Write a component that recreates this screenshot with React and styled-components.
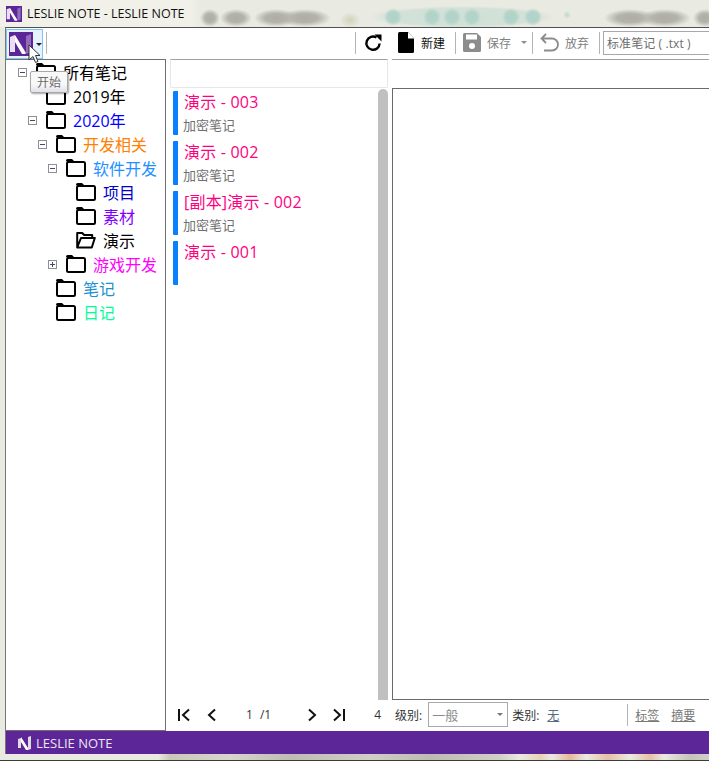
import React from 'react';
import styled, {createGlobalStyle} from 'styled-components';

const CJK = `"Open Sans", "Noto Sans CJK SC", sans-serif`;

const GlobalStyle = createGlobalStyle`
  html, body {
    margin: 0;
    padding: 0;
    background: #e9eae2;
    overflow: hidden;
  }
  * {
    box-sizing: border-box;
  }
`;

const Screen = styled.div`
  position: relative;
  width: 709px;
  height: 761px;
  display: flex;
  flex-direction: column;
  font-family: ${CJK};
  background: #e9eae2;
  overflow: hidden;
`;

const greenDot = x => `radial-gradient(circle 9px at ${x}px 17px, #b0d2c8 0%, #b4d4ca 60%, rgba(190, 216, 206, 0) 100%)`;
const greyDot = (x, w) => `radial-gradient(ellipse ${w}px 9px at ${x}px 18px, #adada6 0%, #b4b4ac 50%, rgba(170, 170, 162, 0) 100%)`;

const TitleBar = styled.div`
  height: 27px;
  flex: none;
  display: flex;
  align-items: center;
  gap: 5px;
  padding-left: 6px;
  font-size: 12.5px;
  color: #111;
  background:
    ${greenDot(393)},
    ${greenDot(432)},
    ${greenDot(452)},
    ${greenDot(472)},
    ${greenDot(511)},
    ${greenDot(533)},
    radial-gradient(circle 4px at 567px 15px, #bcd6cc 0%, rgba(190, 216, 206, 0) 100%),
    radial-gradient(ellipse 92px 11px at 462px 17px, #cfe0d6 0%, #d2e2d8 80%, rgba(210, 226, 216, 0) 100%),
    radial-gradient(ellipse 10px 8px at 350px 20px, #d2d2b8 0%, rgba(210, 210, 184, 0) 100%),
    ${greyDot(210, 10)},
    ${greyDot(236, 16)},
    ${greyDot(276, 22)},
    ${greyDot(305, 26)},
    ${greyDot(630, 26)},
    ${greyDot(665, 26)},
    ${greyDot(705, 12)},
    linear-gradient(90deg, #f1f1ea 0 190px, #e9eae2 200px);
`;

const Window = styled.div`
  flex: 1;
  display: flex;
  flex-direction: column;
  margin-left: 5px;
  min-height: 0;
  border-top: 1px solid #505050;
  border-left: 1px solid #777;
  background: #fff;
`;

const Toolbar = styled.div`
  height: 31px;
  flex: none;
  display: flex;
  align-items: center;
  padding-bottom: 2px;
  font-size: 12px;
`;

const StartButton = styled.div`
  width: 37px;
  height: 30px;
  align-self: flex-start;
  margin-top: 1px;
  display: flex;
  align-items: center;
  gap: 3px;
  padding-left: 2px;
  border: 1px solid #7ec4f5;
  background: #e4f3fd;
`;

const Caret = styled.span`
  width: 0;
  height: 0;
  border-left: 3px solid transparent;
  border-right: 3px solid transparent;
  border-top: 3px solid ${props => props.$color || '#222'};
`;

const Sep = styled.span`
  width: 1px;
  height: ${props => props.$h || 22}px;
  flex: none;
  background: #b4b4b4;
  margin: ${props => props.$m || '0'};
`;

const Spacer = styled.div`
  flex: 1;
`;

const ToolLabel = styled.span`
  color: ${props => (props.$dim ? '#808080' : '#111')};
  margin: ${props => props.$m || '0'};
`;

const FormatBox = styled.div`
  width: 106px;
  height: 24px;
  flex: none;
  display: flex;
  align-items: center;
  padding-left: 3px;
  font-size: 12px;
  letter-spacing: 0.1px;
  color: #6d6d6d;
  white-space: nowrap;
  border: 1px solid #a8a8a8;
  border-right: none;
`;

const Body = styled.div`
  flex: 1;
  display: flex;
  min-height: 0;
`;

const TreePane = styled.div`
  width: 160px;
  flex: none;
  border: 1px solid #6f6f6f;
  border-left: none;
`;

const TreeRow = styled.div`
  height: 24px;
  display: flex;
  align-items: center;
  padding-left: ${props => 12 + props.$level * 10}px;
  font-size: 16px;
  white-space: nowrap;
  color: ${props => props.$color};
`;

const Expander = styled.span`
  width: 9px;
  height: 9px;
  flex: none;
  position: relative;
  margin-right: 9px;
  border: 1px solid #8f8f8f;
  visibility: ${props => (props.$hidden ? 'hidden' : 'visible')};
  &::before {
    content: '';
    position: absolute;
    left: 1px;
    top: 3px;
    width: 5px;
    height: 1px;
    background: #3b4a7a;
  }
  &::after {
    content: '';
    display: ${props => (props.$plus ? 'block' : 'none')};
    position: absolute;
    left: 3px;
    top: 1px;
    width: 1px;
    height: 5px;
    background: #3b4a7a;
  }
`;

const TreeLabel = styled.span`
  margin-left: 7px;
`;

const Workspace = styled.div`
  flex: 1;
  min-width: 0;
  display: flex;
  flex-direction: column;
  padding-left: 4px;
`;

const Columns = styled.div`
  flex: 1;
  min-height: 0;
  display: flex;
  gap: 4px;
`;

const ListColumn = styled.div`
  width: 218px;
  flex: none;
  display: flex;
  flex-direction: column;
`;

const SearchBox = styled.div`
  height: 29px;
  flex: none;
  border: 1px solid #e6e6ee;
  border-top: 1px solid #a0a0a0;
  border-radius: 0 0 2px 2px;
`;

const ListArea = styled.div`
  flex: 1;
  display: flex;
  min-height: 0;
`;

const NoteList = styled.div`
  flex: 1;
  display: flex;
  flex-direction: column;
  gap: 6px;
  padding: 3px 0 0 3px;
`;

const NoteItem = styled.div`
  height: 44px;
  padding-left: 6px;
  border-left: 5px solid #0a80ff;
  border-radius: 1px;
`;

const NoteTitle = styled.div`
  height: 24px;
  line-height: 22px;
  font-size: 16px;
  letter-spacing: 0.2px;
  color: #ff0080;
  white-space: nowrap;
`;

const NoteSub = styled.div`
  height: 20px;
  line-height: 20px;
  font-size: 13px;
  color: #707070;
  margin-left: -1px;
`;

const Scrollbar = styled.div`
  width: 10px;
  flex: none;
  margin-top: 1px;
  background: #c0c0c0;
  border-radius: 5px 5px 0 0;
`;

const EditorColumn = styled.div`
  flex: 1;
  min-width: 0;
  display: flex;
  flex-direction: column;
`;

const EditorHead = styled.div`
  height: 29px;
  flex: none;
  border-top: 1px solid #a0a0a0;
`;

const EditorBox = styled.div`
  flex: 1;
  border: 1px solid #6a6a6a;
  border-right: none;
`;

const BottomBar = styled.div`
  height: 31px;
  flex: none;
  display: flex;
  align-items: center;
  padding-bottom: 2px;
  font-size: 12px;
  color: #333;
  white-space: nowrap;
`;

const PagerIcon = styled.svg`
  width: 14px;
  height: 14px;
  flex: none;
  margin: ${props => props.$m || '0'};
`;

const PageText = styled.span`
  font-size: 12px;
  color: #333;
  margin: ${props => props.$m || '0'};
`;

const SelectBox = styled.div`
  width: 80px;
  height: 25px;
  flex: none;
  display: flex;
  align-items: center;
  justify-content: space-between;
  padding: 0 4px 0 3px;
  margin: 0 4px 0 6px;
  font-size: 13px;
  color: #8a8a8a;
  border: 1px solid #a8a8a8;
`;

const LinkText = styled.span`
  color: ${props => props.$color || '#777'};
  text-decoration: underline;
  margin: ${props => props.$m || '0'};
`;

const StatusBar = styled.div`
  height: 23px;
  flex: none;
  display: flex;
  align-items: center;
  gap: 1px;
  padding-left: 11px;
  font-size: 13px;
  color: #ece6f4;
  background: #5c2699;
`;

const BottomStrip = styled.div`
  height: 7px;
  flex: none;
  margin-left: -6px;
  border-bottom: 1px solid #3c3c3c;
  background: linear-gradient(
    90deg,
    #e9eae2 0 158px,
    #c9c9b8 170px,
    #d6d6cc 230px,
    #bdbdb4 290px,
    #cfcfc6 370px,
    #bcbcb4 430px,
    #d0d0c8 500px,
    #e9eae2 520px,
    #e9d0b4 540px,
    #e9eae2 552px,
    #e6b898 570px,
    #e9eae2 586px,
    #e6c0a4 608px,
    #e9eae2 630px,
    #e6c0a4 650px,
    #e9eae2 664px,
    #c4c4bc 690px,
    #d0d0c8 709px
  );
`;

const Tooltip = styled.div`
  position: absolute;
  left: 30px;
  top: 71px;
  width: 38px;
  height: 22px;
  display: flex;
  align-items: center;
  justify-content: center;
  font-size: 12px;
  color: #6c6c6c;
  background: linear-gradient(#f8f8f8 60%, #e2e0ea);
  border: 1px solid #a8a8a8;
  border-radius: 2px;
  box-shadow: 1px 1px 2px rgba(0, 0, 0, 0.35);
`;

const Cursor = styled.svg`
  position: absolute;
  left: 28px;
  top: 44px;
  width: 13px;
  height: 20px;
`;

const Logo = ({size}) => (
  <svg width={size} height={size} viewBox="0 0 24 24" style={{flex: 'none'}}>
    <rect width="24" height="24" fill="#5c2699" />
    <path d="M1 20V5l5-2v17z" fill="#e8e0f2" />
    <path d="M6 3l11 18-1 1H13L6 10z" fill="#fff" />
    <path d="M17 4l5-2v18l-5 2z" fill="#8f6dbb" />
  </svg>
);

const Folder = ({open}) => (
  <svg width="20" height="18" viewBox="0 0 20 18" style={{flex: 'none'}}>
    {open ? (
      <path
        d="M1.2 16.5V2h5l2 2h8v3M1.2 16.5h14.6L18.8 7H5z"
        fill="none"
        stroke="#000"
        strokeWidth="2"
        strokeLinejoin="round"
      />
    ) : (
      <>
        <path d="M0 1.5Q0 0 1.5 0H6l3 3H1z" fill="#000" />
        <rect x="1" y="3" width="18" height="14" rx="1.5" fill="none" stroke="#000" strokeWidth="2" />
      </>
    )}
  </svg>
);

const treeRows = [
  {label: '所有笔记', level: 0, color: '#000', exp: 'minus'},
  {label: '2019年', level: 1, color: '#000'},
  {label: '2020年', level: 1, color: '#0000ff', exp: 'minus'},
  {label: '开发相关', level: 2, color: '#ff8000', exp: 'minus'},
  {label: '软件开发', level: 3, color: '#1e90ff', exp: 'minus'},
  {label: '项目', level: 4, color: '#0000c8'},
  {label: '素材', level: 4, color: '#8000ff'},
  {label: '演示', level: 4, color: '#000', open: true},
  {label: '游戏开发', level: 3, color: '#ff00ff', exp: 'plus'},
  {label: '笔记', level: 2, color: '#1e90d0'},
  {label: '日记', level: 2, color: '#00ff99'},
];

const notes = [
  {title: '演示 - 003', sub: '加密笔记'},
  {title: '演示 - 002', sub: '加密笔记'},
  {title: '[副本]演示 - 002', sub: '加密笔记'},
  {title: '演示 - 001', sub: ''},
];

const Stroke = {fill: 'none', stroke: '#111', strokeWidth: 2};

const Pager = () => (
  <>
    <PagerIcon viewBox="0 0 14 14" $m="0 0 0 7px">
      <path d="M2 1v12M12 1.5L6 7l6 5.5" {...Stroke} />
    </PagerIcon>
    <PagerIcon viewBox="0 0 14 14" $m="0 0 0 14px">
      <path d="M10 1.5L4 7l6 5.5" {...Stroke} />
    </PagerIcon>
    <PageText $m="0 0 0 27px">1</PageText>
    <PageText $m="0 0 0 7px">/1</PageText>
    <PagerIcon viewBox="0 0 14 14" $m="0 0 0 34px">
      <path d="M4 1.5l6 5.5-6 5.5" {...Stroke} />
    </PagerIcon>
    <PagerIcon viewBox="0 0 14 14" $m="0 0 0 13px">
      <path d="M12 1v12M2 1.5L8 7l-6 5.5" {...Stroke} />
    </PagerIcon>
    <PageText $m="0 0 0 28px">4</PageText>
  </>
);

export default function App() {
  return (
    <Screen>
      <GlobalStyle />
      <TitleBar>
        <Logo size={16} />
        <span>LESLIE NOTE - LESLIE NOTE</span>
      </TitleBar>
      <Window>
        <Toolbar>
          <StartButton>
            <Logo size={24} />
            <Caret />
          </StartButton>
          <Sep $m="0 0 0 3px" />
          <Spacer />
          <Sep />
          <svg width="18" height="18" viewBox="0 0 18 18" style={{marginLeft: 8, flex: 'none'}}>
            <path d="M15.6 9.5A6.6 6.6 0 1 1 12.5 3.6" fill="none" stroke="#000" strokeWidth="2.4" />
            <path d="M10.5 0.5h7v7z" fill="#000" />
          </svg>
          <svg width="16" height="21" viewBox="0 0 16 21" style={{marginLeft: 16, flex: 'none'}}>
            <path d="M1.5 0H10l6 6.5V19.5Q16 21 14.5 21h-13Q0 21 0 19.5v-18Q0 0 1.5 0z" fill="#000" />
            <path d="M10 0v6.5h6z" fill="#fff" />
          </svg>
          <ToolLabel $m="0 0 0 7px">新建</ToolLabel>
          <Sep $m="0 0 0 10px" />
          <svg width="18" height="19" viewBox="0 0 18 19" style={{marginLeft: 7, flex: 'none'}}>
            <path d="M1.5 0H14l4 4v13.5Q18 19 16.5 19h-15Q0 19 0 17.5v-16Q0 0 1.5 0z" fill="#8c8c8c" />
            <rect x="3" y="1.5" width="11" height="5" fill="#fff" />
            <circle cx="9" cy="13" r="3" fill="#fff" />
          </svg>
          <ToolLabel $dim $m="0 0 0 6px">保存</ToolLabel>
          <span style={{marginLeft: 10, display: 'flex'}}>
            <Caret $color="#8c8c8c" />
          </span>
          <Sep $m="0 0 0 5px" />
          <svg width="19" height="20" viewBox="0 0 19 20" style={{marginLeft: 7, flex: 'none'}}>
            <path d="M6 1L1.5 5.5 6 10M2 5.5h10a5.5 5.5 0 0 1 0 12H4" fill="none" stroke="#8c8c8c" strokeWidth="1.8" />
          </svg>
          <ToolLabel $dim $m="0 0 0 6px">放弃</ToolLabel>
          <Sep $m="0 3px 0 10px" />
          <FormatBox>标准笔记 ( .txt )</FormatBox>
        </Toolbar>
        <Body>
          <TreePane>
            {treeRows.map(row => (
              <TreeRow key={row.label} $level={row.level} $color={row.color}>
                <Expander $hidden={!row.exp} $plus={row.exp === 'plus'} />
                <Folder open={row.open} />
                <TreeLabel>{row.label}</TreeLabel>
              </TreeRow>
            ))}
          </TreePane>
          <Workspace>
            <Columns>
              <ListColumn>
                <SearchBox />
                <ListArea>
                  <NoteList>
                    {notes.map(note => (
                      <NoteItem key={note.title}>
                        <NoteTitle>{note.title}</NoteTitle>
                        <NoteSub>{note.sub}</NoteSub>
                      </NoteItem>
                    ))}
                  </NoteList>
                  <Scrollbar />
                </ListArea>
              </ListColumn>
              <EditorColumn>
                <EditorHead />
                <EditorBox />
              </EditorColumn>
            </Columns>
            <BottomBar>
              <Pager />
              <span style={{marginLeft: 14}}>级别:</span>
              <SelectBox>
                一般
                <Caret $color="#777" />
              </SelectBox>
              <span>类别:</span>
              <LinkText $color="#5a6a80" $m="0 0 0 8px">无</LinkText>
              <Sep $m="0 7px 0 68px" />
              <LinkText>标签</LinkText>
              <LinkText $m="0 0 0 12px">摘要</LinkText>
            </BottomBar>
          </Workspace>
        </Body>
        <StatusBar>
          <svg width="18" height="16" viewBox="0 0 18 16" style={{flex: 'none'}}>
            <path d="M1 13V4l3-1v10z" fill="#ddd" />
            <path d="M4 2l7 11v2H9L4 7z" fill="#fff" />
            <path d="M11 2l3-1v13l-3 1z" fill="#ddd" />
          </svg>
          <span>LESLIE NOTE</span>
        </StatusBar>
        <BottomStrip />
      </Window>
      <Cursor viewBox="0 0 13 20">
        <path d="M1 1v15l4-3.5 2.5 6 2.5-1-2.5-6H12z" fill="#fff" stroke="#333" strokeWidth="1" />
      </Cursor>
      <Tooltip>开始</Tooltip>
    </Screen>
  );
}
